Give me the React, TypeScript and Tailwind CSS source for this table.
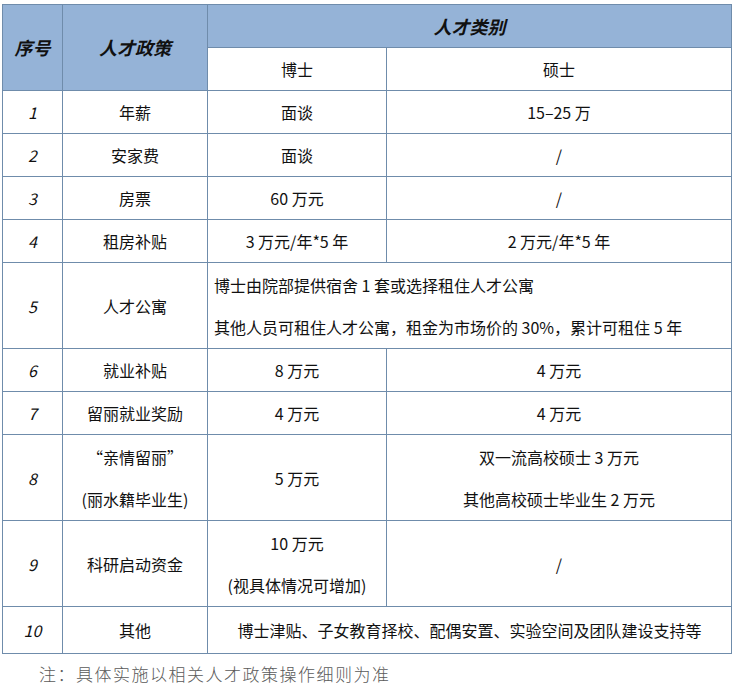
const cjk = '"Noto Sans CJK SC", "Noto Sans", sans-serif';

const rows: { no: string; policy: string[]; phd: string[]; master: string[]; merged?: string[]; left?: boolean; h: string }[] = [
  { no: '1', policy: ['年薪'], phd: ['面谈'], master: ['15–25 万'], h: 'h-[43px]' },
  { no: '2', policy: ['安家费'], phd: ['面谈'], master: ['/'], h: 'h-[43px]' },
  { no: '3', policy: ['房票'], phd: ['60 万元'], master: ['/'], h: 'h-[43px]' },
  { no: '4', policy: ['租房补贴'], phd: ['3 万元/年*5 年'], master: ['2 万元/年*5 年'], h: 'h-[43px]' },
  {
    no: '5',
    policy: ['人才公寓'],
    phd: [],
    master: [],
    merged: ['博士由院部提供宿舍 1 套或选择租住人才公寓', '其他人员可租住人才公寓，租金为市场价的 30%，累计可租住 5 年'],
    left: true,
    h: 'h-[86px]',
  },
  { no: '6', policy: ['就业补贴'], phd: ['8 万元'], master: ['4 万元'], h: 'h-[43px]' },
  { no: '7', policy: ['留丽就业奖励'], phd: ['4 万元'], master: ['4 万元'], h: 'h-[43px]' },
  {
    no: '8',
    policy: ['“亲情留丽”', '(丽水籍毕业生)'],
    phd: ['5 万元'],
    master: ['双一流高校硕士 3 万元', '其他高校硕士毕业生 2 万元'],
    h: 'h-[86px]',
  },
  { no: '9', policy: ['科研启动资金'], phd: ['10 万元', '(视具体情况可增加)'], master: ['/'], h: 'h-[86px]' },
  {
    no: '10',
    policy: ['其他'],
    phd: [],
    master: [],
    merged: ['博士津贴、子女教育择校、配偶安置、实验空间及团队建设支持等'],
    h: 'h-[47px]',
  },
];

function Lines({ lines }: { lines: string[] }) {
  return (
    <>
      {lines.map((l) => (
        <div key={l} className="leading-[42px]">
          {l}
        </div>
      ))}
    </>
  );
}

export default function App() {
  const cell = 'border border-[#6f8cab] p-0 align-middle';
  return (
    <div className="bg-white pl-[2px] pt-[4px]" style={{ fontFamily: cjk }}>
      <table className="w-[729px] table-fixed border-collapse text-[16px] text-[#111]">
        <colgroup>
          <col className="w-[60px]" />
          <col className="w-[145px]" />
          <col className="w-[179px]" />
          <col className="w-[345px]" />
        </colgroup>
        <thead>
          <tr className="h-[43px]">
            <th rowSpan={2} className={`${cell} bg-[#95b3d7] text-center text-[18px] font-bold italic`}>
              序号
            </th>
            <th rowSpan={2} className={`${cell} bg-[#95b3d7] text-center text-[18px] font-bold italic`}>
              人才政策
            </th>
            <th colSpan={2} className={`${cell} bg-[#95b3d7] text-center text-[18px] font-bold italic`}>
              人才类别
            </th>
          </tr>
          <tr className="h-[43px]">
            <th className={`${cell} text-center font-normal`}>博士</th>
            <th className={`${cell} text-center font-normal`}>硕士</th>
          </tr>
        </thead>
        <tbody>
          {rows.map((r) => (
            <tr key={r.no} className={r.h}>
              <td className={`${cell} text-center italic`}>{r.no}</td>
              <td className={`${cell} text-center`}>
                <Lines lines={r.policy} />
              </td>
              {r.merged ? (
                <td colSpan={2} className={`${cell} ${r.left ? 'pl-[6px] text-left' : 'text-center'}`}>
                  <Lines lines={r.merged} />
                </td>
              ) : (
                <>
                  <td className={`${cell} text-center`}>
                    <Lines lines={r.phd} />
                  </td>
                  <td className={`${cell} text-center`}>
                    <Lines lines={r.master} />
                  </td>
                </>
              )}
            </tr>
          ))}
        </tbody>
      </table>
      <p className="mt-[10px] pl-[37px] text-[17px] leading-[20px] tracking-[1.5px] text-[#5a5a5a] font-light">
        注：具体实施以相关人才政策操作细则为准
      </p>
    </div>
  );
}
